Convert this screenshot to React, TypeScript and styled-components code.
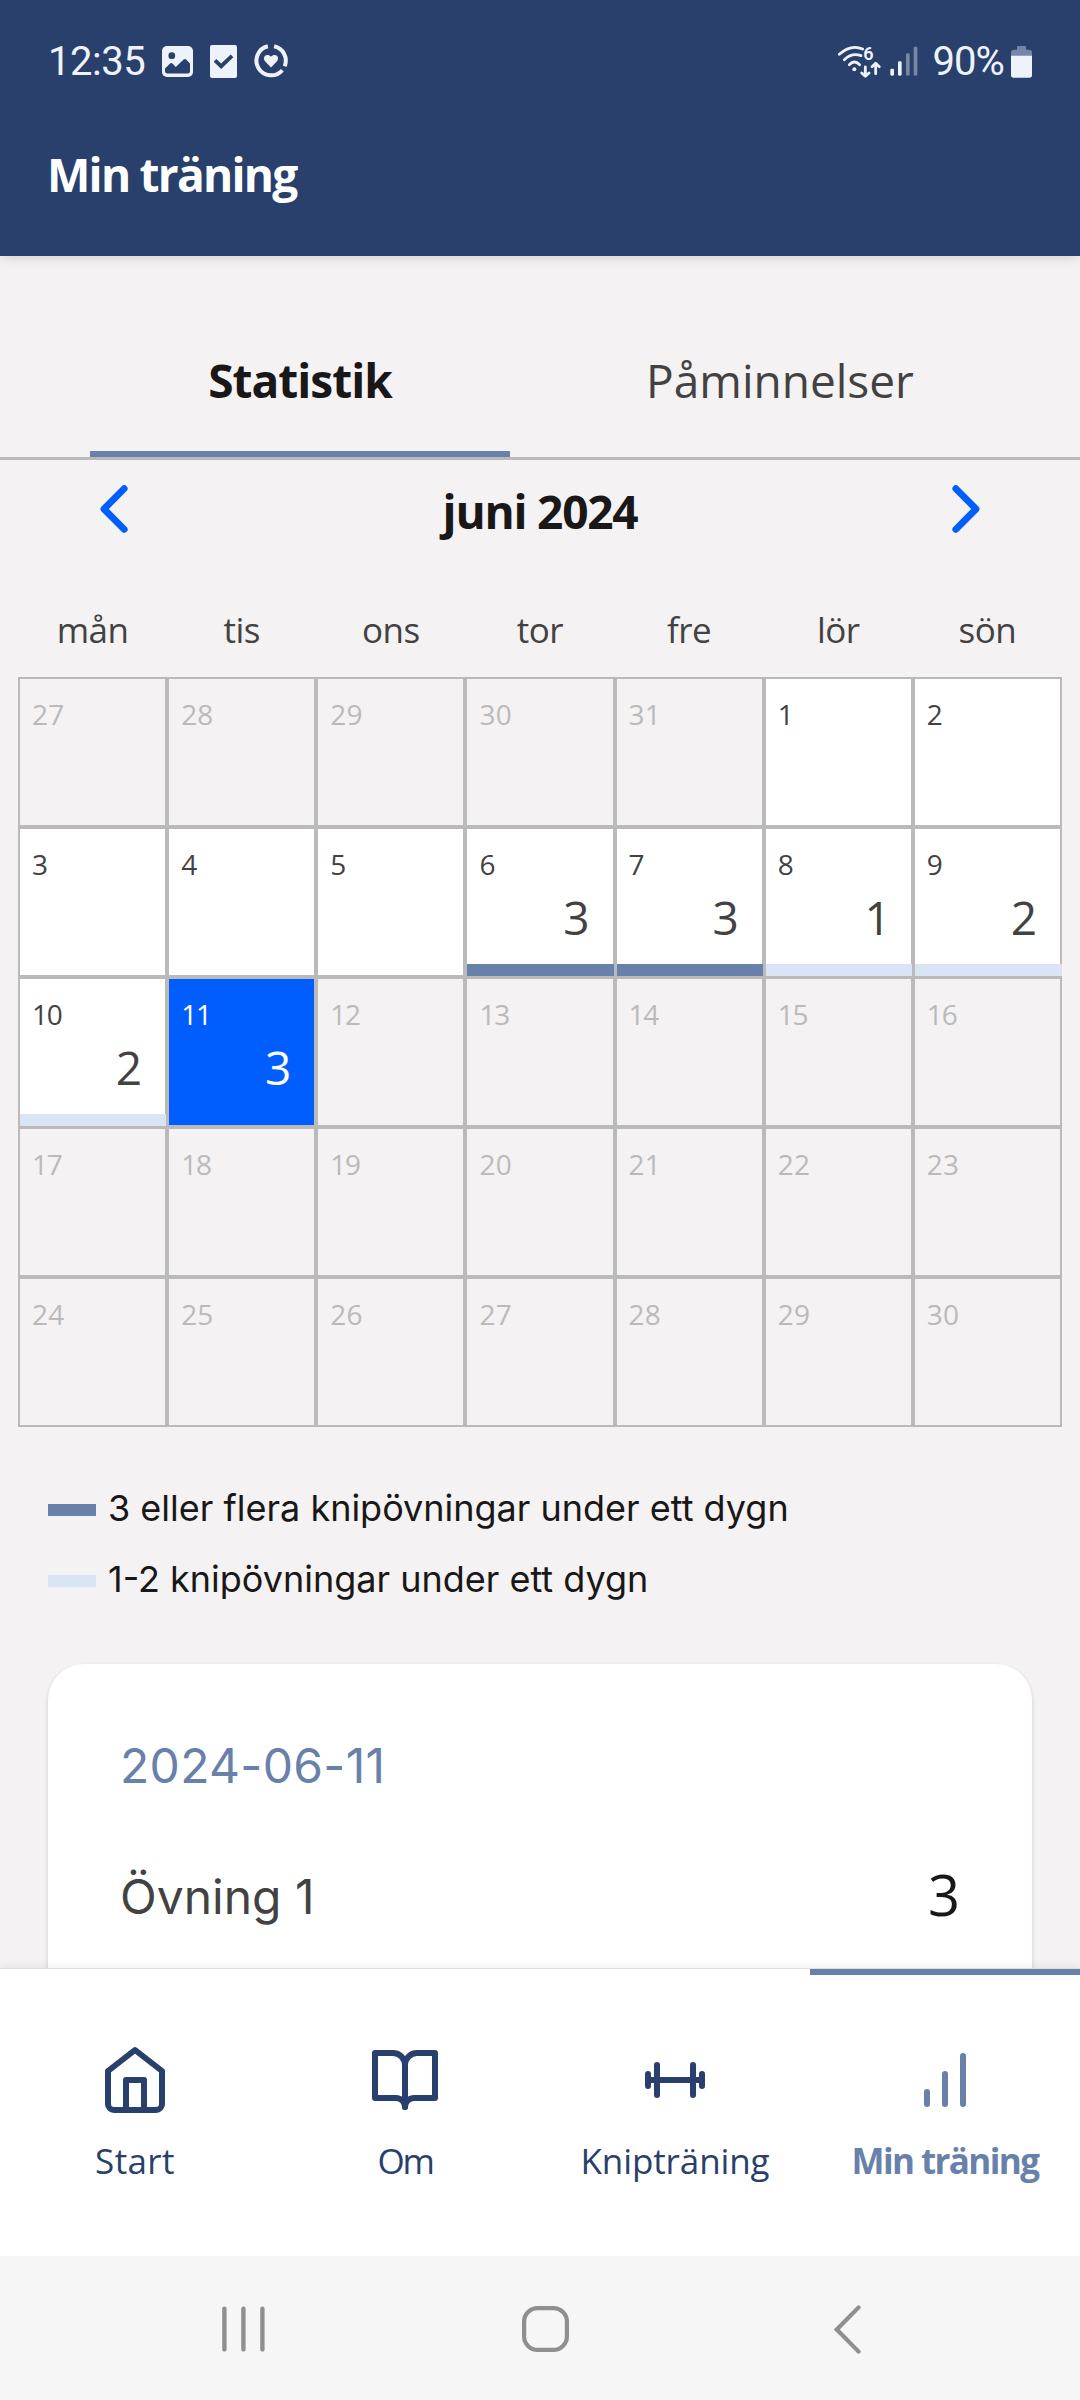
import React from 'react';
import styled, { createGlobalStyle } from 'styled-components';
import { FiHome, FiBookOpen, FiBarChart } from 'react-icons/fi';

const c = {
  navy: '#28406b',
  slate: '#6781ab',
  pale: '#d9e4f5',
  blue: '#005eff',
  bg: '#f4f2f3',
  line: '#bababa',
  ink: '#191717',
  body: '#434242',
  faded: '#bbbabb',
  status: '#eef3fb',
};

const ui = `'Open Sans', 'Noto Sans', sans-serif`;
const inter = `Inter, 'Noto Sans', sans-serif`;

const GlobalStyle = createGlobalStyle`
  * { box-sizing: border-box; }
  body { margin: 0; background: ${c.bg}; }
  button { border: 0; padding: 0; margin: 0; background: none; font: inherit; color: inherit; }
  svg { display: block; flex: none; }
`;

const Screen = styled.div`
  display: flex;
  flex-direction: column;
  width: 1080px;
  height: 2400px;
  overflow: hidden;
  font-family: ${ui};
  background: ${c.bg};
`;

const Header = styled.header`
  flex: none;
  height: 256px;
  background: ${c.navy};
  box-shadow: 0 1px 12px rgba(0, 0, 0, 0.16);
  z-index: 1;
`;

const StatusBar = styled.div`
  display: flex;
  align-items: center;
  justify-content: space-between;
  height: 122px;
  padding: 0 47px 0 48px;
  font-family: Roboto, sans-serif;
  font-size: 40px;
  line-height: 48px;
  color: ${c.status};
`;

const StatusLeft = styled.div`
  display: flex;
  align-items: center;
  gap: 17px;
`;

const StatusRight = styled.div`
  display: flex;
  align-items: center;
  gap: 6px;
`;

const Clock = styled.span`
  padding-top: 1px;
  letter-spacing: -0.5px;
`;

const Percent = styled.span`
  margin-left: 7px;
  padding-top: 1px;
  letter-spacing: -0.9px;
`;

const Title = styled.h1`
  margin: 0;
  padding-left: 47px;
  font-size: 46px;
  font-weight: 700;
  line-height: 104px;
  letter-spacing: -1.75px;
  color: #fff;
`;

const Main = styled.main`
  flex: 1;
  min-height: 0;
  overflow: hidden;
`;

const Tabs = styled.div`
  display: flex;
  gap: 60px;
  margin-top: 54px;
  padding: 0 90px;
  border-bottom: 3px solid ${c.line};
`;

const Tab = styled.button<{ $active?: boolean }>`
  width: 420px;
  height: 147px;
  padding-bottom: 2px;
  border-bottom: 6px solid ${(p) => (p.$active ? c.slate : 'transparent')};
  font-size: 46px;
  font-weight: ${(p) => (p.$active ? 700 : 400)};
  letter-spacing: ${(p) => (p.$active ? '-1px' : '0')};
  color: ${(p) => (p.$active ? c.ink : c.body)};
`;

const MonthBar = styled.div`
  display: flex;
  align-items: center;
  justify-content: space-between;
  height: 102px;
  padding: 0 100px;
`;

const MonthButton = styled.button`
  padding-bottom: 4px;
  color: ${c.blue};
`;

const MonthName = styled.h2`
  margin: 0;
  font-size: 46px;
  font-weight: 700;
  letter-spacing: -1.2px;
  color: ${c.ink};
`;

const Weekdays = styled.div`
  display: grid;
  grid-template-columns: repeat(7, 1fr);
  margin: 20px 18px 0;
  font-size: 35px;
  line-height: 95px;
  letter-spacing: -0.5px;
  text-align: center;
  color: ${c.body};
`;

const Calendar = styled.div`
  display: grid;
  grid-template-columns: repeat(7, 1fr);
  grid-auto-rows: 150px;
  margin: 0 18px;
`;

type Tone = 'off' | 'on' | 'selected';

const toneBg = { off: 'transparent', on: '#fff', selected: c.blue };
const toneInk = { off: c.faded, on: c.body, selected: '#fff' };

const Cell = styled.div<{ $tone: Tone }>`
  position: relative;
  display: flex;
  flex-direction: column;
  padding: 18px 23px 0 12px;
  border: 2px solid ${c.line};
  background: ${(p) => toneBg[p.$tone]};
  color: ${(p) => toneInk[p.$tone]};
  font-weight: 450;
`;

const DayNumber = styled.span<{ $tight?: boolean }>`
  font-size: 28px;
  line-height: 34px;
  letter-spacing: ${(p) => (p.$tight ? '-1.2px' : '0.2px')};
`;

const Count = styled.span<{ $one: boolean }>`
  align-self: flex-end;
  margin-top: 6px;
  margin-right: ${(p) => (p.$one ? -3 : 0)}px;
  font-size: 46px;
  line-height: 60px;
`;

const Level = styled.i<{ $full: boolean; $last: boolean }>`
  position: absolute;
  left: 0;
  right: ${(p) => (p.$last ? -2 : -1)}px;
  bottom: -1px;
  height: 12px;
  background: ${(p) => (p.$full ? c.slate : c.pale)};
`;

const Legend = styled.ul`
  margin: 45px 0 0;
  padding: 0 0 0 48px;
  list-style: none;
`;

const LegendRow = styled.li`
  display: flex;
  align-items: center;
  gap: 12px;
  height: 71px;
  font-family: ${inter};
  font-size: 36px;
  color: ${c.ink};
`;

const Swatch = styled.i<{ $full?: boolean }>`
  width: 48px;
  height: 12px;
  margin-top: 5px;
  background: ${(p) => (p.$full ? c.slate : c.pale)};
`;

const Card = styled.section`
  height: 500px;
  margin: 50px 48px 0;
  padding: 72px;
  border-radius: 36px;
  background: #fff;
  box-shadow: 0 2px 4px rgba(0, 0, 0, 0.16);
  font-family: ${inter};
  font-size: 48px;
`;

const CardDate = styled.div`
  line-height: 60px;
  letter-spacing: 0.3px;
  color: ${c.slate};
`;

const CardRow = styled.div`
  display: flex;
  align-items: center;
  justify-content: space-between;
  height: 72px;
  margin-top: 64px;
  color: ${c.body};
`;

const CardCount = styled.span`
  padding-bottom: 5px;
  font-family: ${ui};
  font-size: 56px;
  font-weight: 450;
  line-height: 66px;
  color: ${c.ink};
`;

const TabBar = styled.nav`
  flex: none;
  display: grid;
  grid-template-columns: repeat(4, 1fr);
  height: 288px;
  border-top: 1px solid #dfdee0;
  background: #fff;
  box-shadow: 0 -1px 10px rgba(0, 0, 0, 0.08);
  z-index: 1;
`;

const TabBarItem = styled.button<{ $active?: boolean }>`
  display: flex;
  flex-direction: column;
  align-items: center;
  padding-top: 69px;
  border-top: 6px solid ${(p) => (p.$active ? c.slate : 'transparent')};
  color: ${(p) => (p.$active ? c.slate : c.navy)};
`;

const TabBarLabel = styled.span<{ $active?: boolean; $spacing?: number }>`
  margin-top: 23px;
  font-size: 35px;
  font-weight: ${(p) => (p.$active ? 700 : 400)};
  line-height: 44px;
  letter-spacing: ${(p) => p.$spacing ?? 0}px;
  white-space: nowrap;
`;

const SystemNav = styled.nav`
  flex: none;
  display: grid;
  grid-template-columns: repeat(3, 302px);
  align-items: center;
  justify-items: center;
  height: 144px;
  padding: 2px 0 0 92px;
  background: #f6f6f6;
  color: #8f8f8f;
  z-index: 2;
`;

const PictureIcon = () => (
  <svg width="31" height="31" viewBox="0 0 31 31">
    <rect width="31" height="31" rx="5" fill={c.status} />
    <circle cx="9.8" cy="9.7" r="3.4" fill={c.navy} />
    <path d="M3 22.5 8 17.4q1.2-1 2.4 0l3.4 3.6L21.6 13.6q1.3-1.1 2.6 0L28 17.6v7.6q0 2.4-2.4 2.4H5.4Q3 27.6 3 25.2z" fill={c.navy} />
  </svg>
);

const TaskIcon = () => (
  <svg width="27" height="33" viewBox="0 0 27 33">
    <rect width="27" height="33" rx="2" fill={c.status} />
    <path d="m5 15.3 6.2 5.9L22 10.8" fill="none" stroke={c.navy} strokeWidth="3.9" />
  </svg>
);

const HealthIcon = () => (
  <svg width="34" height="34" viewBox="0 0 34 34">
    <g fill="none" stroke={c.status} strokeWidth="4">
      <path d="M20.1 2.3A14.7 14.7 0 0 1 30.7 22.2" />
      <path d="M28.3 26.2A14.7 14.7 0 1 1 13.9 2.3" />
    </g>
    <path d="M17 23.4 11 17.2c-1.6-1.8-1.3-4.4.3-5.6 1.7-1.2 4.3-.8 5.7 1.2 1.4-2 4-2.4 5.7-1.2 1.6 1.2 1.9 3.8.3 5.6z" fill={c.status} />
  </svg>
);

const WifiIcon = () => (
  <svg width="47" height="35" viewBox="50 40 141 105">
    <g fill="none" stroke={c.status} strokeWidth="8.4" strokeLinecap="round" strokeLinejoin="round">
      <path d="M60 71Q94 40 130 55" />
      <path d="M75 87Q98 65 125 75" />
      <path d="M90 102Q105 86 121 102" />
      <path d="M138 109v27M127 127l11 10 11-10M169 129V99M158 108l11-10 11 10" />
    </g>
    <circle cx="105" cy="116" r="6" fill={c.status} />
    <text x="132" y="88" fontFamily="Roboto, sans-serif" fontWeight="600" fontSize="54" fill={c.status}>
      6
    </text>
  </svg>
);

const SignalIcon = () => (
  <svg width="30" height="35" viewBox="209 40 90 105" fill={c.status}>
    <rect x="213" y="114" width="11" height="21" rx="4" />
    <rect x="236" y="92" width="11" height="43" rx="4" />
    <rect x="260" y="68" width="11" height="67" rx="4" opacity="0.4" />
    <rect x="283" y="48" width="11" height="87" rx="4" opacity="0.4" />
  </svg>
);

const BatteryIcon = () => (
  <svg width="23" height="35" viewBox="570 40 69 105">
    <path d="M573 76V66q0-9 9-9h9V49q0-3 3-3h21q3 0 3 3v8h9q9 0 9 9v10z" fill="#7586aa" />
    <path d="M573 75h63v58q0 8-8 8h-47q-8 0-8-8z" fill={c.status} />
  </svg>
);

const Chevron = ({ right }: { right?: boolean }) => (
  <svg width="28" height="48" viewBox="0 0 28 48" fill="none" stroke="currentColor" strokeWidth="6.8" strokeLinecap="round" strokeLinejoin="round">
    <path d={right ? 'M3.8 3.6 24 24 3.8 44.4' : 'M24.2 3.6 4 24l20.2 20.4'} />
  </svg>
);

const DumbbellIcon = () => (
  <svg width="72" height="72" viewBox="0 0 24 24" fill="none" stroke="currentColor" strokeWidth="2" strokeLinecap="round">
    <path d="M3 10v4M6 7v10M18 7v10M21 10v4M3 12h18" />
  </svg>
);

const levels: Record<number, number> = { 6: 3, 7: 3, 8: 1, 9: 2, 10: 2, 11: 3 };
const today = 11;

const days = [
  ...[27, 28, 29, 30, 31].map((n) => ({ n, outside: true })),
  ...Array.from({ length: 30 }, (_, i) => ({ n: i + 1, outside: false })),
];

const DayCell = ({ n, outside, last }: { n: number; outside: boolean; last: boolean }) => {
  const tone: Tone = outside || n > today ? 'off' : n === today ? 'selected' : 'on';
  const count = outside ? undefined : levels[n];
  return (
    <Cell $tone={tone}>
      <DayNumber $tight={n >= 10 && n < 20}>{n}</DayNumber>
      {count !== undefined && <Count $one={count === 1}>{count}</Count>}
      {count !== undefined && tone === 'on' && <Level $full={count >= 3} $last={last} />}
    </Cell>
  );
};

export default function App() {
  return (
    <Screen>
      <GlobalStyle />
      <Header>
        <StatusBar>
          <StatusLeft>
            <Clock>12:35</Clock>
            <PictureIcon />
            <TaskIcon />
            <HealthIcon />
          </StatusLeft>
          <StatusRight>
            <WifiIcon />
            <SignalIcon />
            <Percent>90%</Percent>
            <BatteryIcon />
          </StatusRight>
        </StatusBar>
        <Title>Min träning</Title>
      </Header>

      <Main>
        <Tabs>
          <Tab $active>Statistik</Tab>
          <Tab>Påminnelser</Tab>
        </Tabs>
        <MonthBar>
          <MonthButton>
            <Chevron />
          </MonthButton>
          <MonthName>juni 2024</MonthName>
          <MonthButton>
            <Chevron right />
          </MonthButton>
        </MonthBar>
        <Weekdays>
          {['mån', 'tis', 'ons', 'tor', 'fre', 'lör', 'sön'].map((d) => (
            <span key={d}>{d}</span>
          ))}
        </Weekdays>
        <Calendar>
          {days.map((d, i) => (
            <DayCell key={i} n={d.n} outside={d.outside} last={i % 7 === 6} />
          ))}
        </Calendar>
        <Legend>
          <LegendRow>
            <Swatch $full />
            3 eller flera knipövningar under ett dygn
          </LegendRow>
          <LegendRow>
            <Swatch />
            1-2 knipövningar under ett dygn
          </LegendRow>
        </Legend>
        <Card>
          <CardDate>2024-06-11</CardDate>
          <CardRow>
            <span>Övning 1</span>
            <CardCount>3</CardCount>
          </CardRow>
        </Card>
      </Main>

      <TabBar>
        <TabBarItem>
          <FiHome size={72} />
          <TabBarLabel $spacing={0.4}>Start</TabBarLabel>
        </TabBarItem>
        <TabBarItem>
          <FiBookOpen size={72} />
          <TabBarLabel $spacing={-2.4}>Om</TabBarLabel>
        </TabBarItem>
        <TabBarItem>
          <DumbbellIcon />
          <TabBarLabel $spacing={-0.1}>Knipträning</TabBarLabel>
        </TabBarItem>
        <TabBarItem $active>
          <FiBarChart size={72} />
          <TabBarLabel $active $spacing={-1.6}>
            Min träning
          </TabBarLabel>
        </TabBarItem>
      </TabBar>

      <SystemNav>
        <svg width="43" height="46" viewBox="0 0 43 46" fill="none" stroke="currentColor" strokeWidth="4.4" strokeLinecap="round">
          <path d="M2.4 2.6v40.8M21.4 2.6v40.8M40.4 2.6v40.8" />
        </svg>
        <svg width="47" height="46" viewBox="0 0 47 46" fill="none" stroke="currentColor" strokeWidth="4.2">
          <rect x="2.1" y="2.1" width="42.8" height="41.8" rx="13.5" />
        </svg>
        <svg width="27" height="49" viewBox="0 0 27 49" fill="none" stroke="currentColor" strokeWidth="4.2" strokeLinecap="round">
          <path d="M24.6 2.4 2.8 24.5l21.8 22.1" />
        </svg>
      </SystemNav>
    </Screen>
  );
}
